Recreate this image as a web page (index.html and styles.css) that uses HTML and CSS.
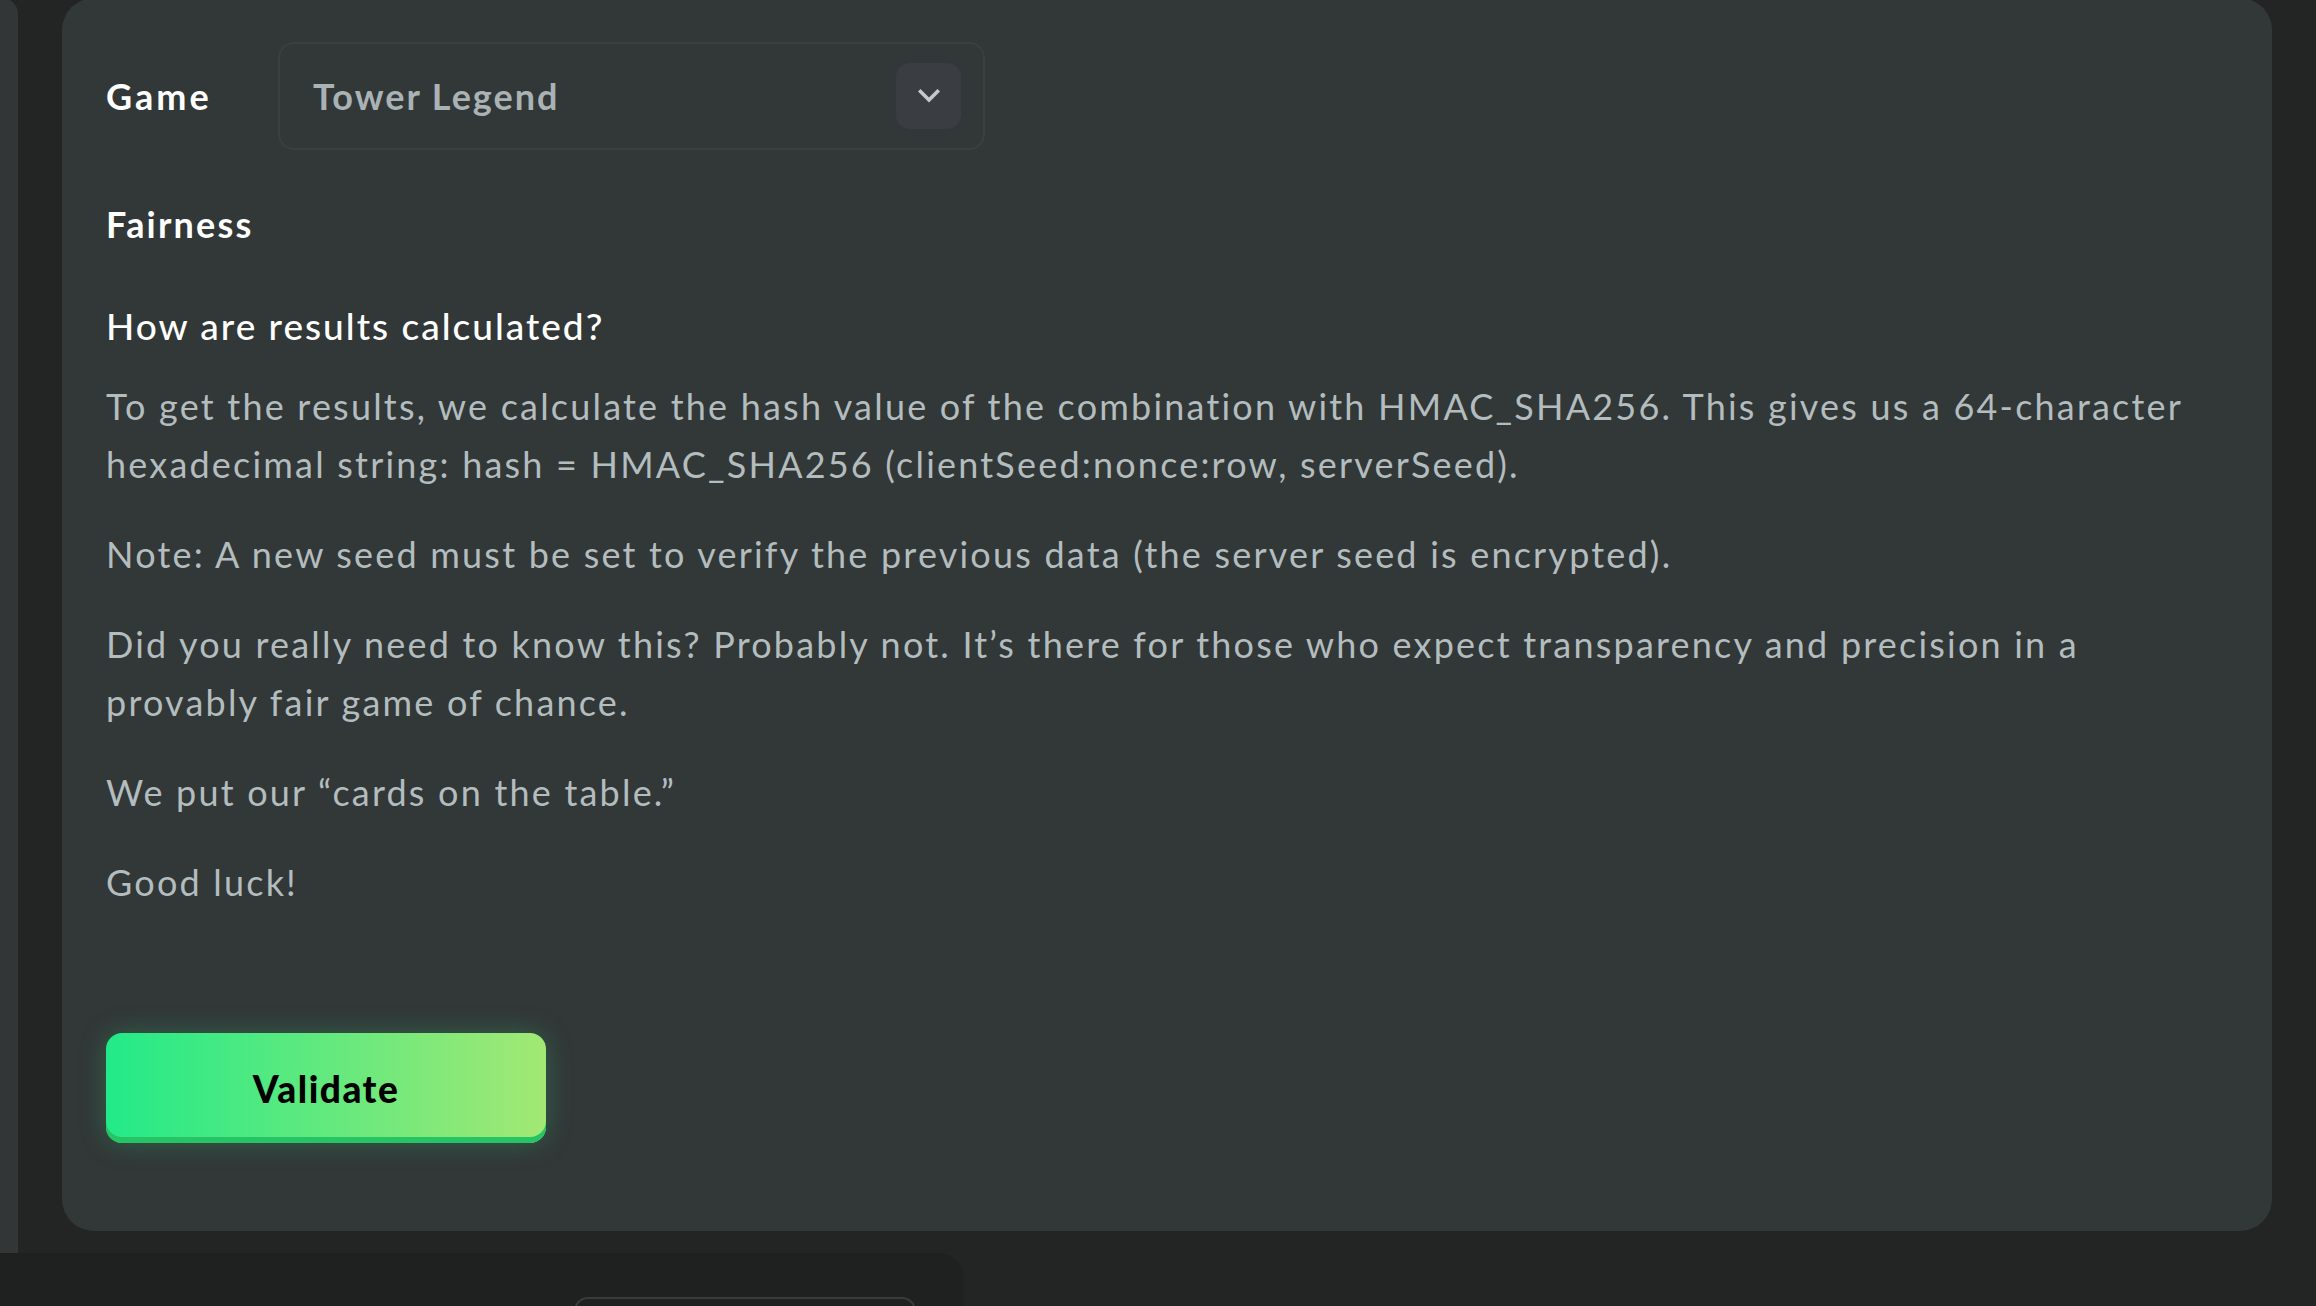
FILE: index.html
```html
<!DOCTYPE html>
<html lang="en">

<head>
    <meta charset="UTF-8">
    <meta name="viewport" content="width=device-width, initial-scale=1.0">
    <title>Fairness</title>
    <link rel="stylesheet" href="styles.css">
</head>

<body>
    <div class="page">
        <aside class="rail"></aside>
        <main class="card">
            <div class="game-row">
                <span class="game-label">Game</span>
                <div class="select">
                    <span class="select-value">Tower Legend</span>
                    <span class="select-toggle">
                        <svg width="22" height="14" viewBox="0 0 22 14">
                            <path d="M2.5 2.5 L11 11 L19.5 2.5" fill="none" stroke="#c3cacc" stroke-width="3.6" stroke-linecap="square" />
                        </svg>
                    </span>
                </div>
            </div>
            <h2 class="section-title">Fairness</h2>
            <h3 class="question">How are results calculated?</h3>
            <p class="text">To get the results, we calculate the hash value of the combination with HMAC_SHA256. This gives us a 64-character hexadecimal string: hash = HMAC_SHA256 (clientSeed:nonce:row, serverSeed).</p>
            <p class="text">Note: A new seed must be set to verify the previous data (the server seed is encrypted).</p>
            <p class="text">Did you really need to know this? Probably not. It’s there for those who expect transparency and precision in a provably fair game of chance.</p>
            <p class="text">We put our “cards on the table.”</p>
            <p class="text">Good luck!</p>
            <button class="btn-validate">Validate</button>
        </main>
    </div>
    <div class="bottom-panel">
        <div class="bottom-field"></div>
    </div>
</body>

</html>
```

FILE: styles.css
```css
html {
    font-family: Lato, 'Noto Sans', sans-serif;
}

body {
    margin: 0;
    height: 1306px;
    overflow: hidden;
    background: #232524;
}

.page {
    display: flex;
    gap: 44px;
    padding-right: 44px;
    height: 1255px;
    margin-top: -2px;
}

.rail {
    width: 18px;
    flex: none;
    background: #323636;
    border-radius: 0 16px 0 0;
}

.card {
    flex: 1;
    align-self: flex-start;
    background: #323737;
    border-radius: 32px;
    padding: 44px 44px 88px;
}

.game-row {
    display: flex;
    align-items: center;
}

.game-label {
    width: 172px;
    font-size: 36px;
    font-weight: 700;
    letter-spacing: 3px;
    color: #ffffff;
}

.select {
    box-sizing: border-box;
    width: 707px;
    height: 108px;
    border: 2px solid #3a3f40;
    border-radius: 16px;
    display: flex;
    align-items: center;
    justify-content: space-between;
    padding: 0 22px 0 33px;
}

.select-value {
    font-size: 36px;
    font-weight: 700;
    letter-spacing: 2px;
    color: #a9b2b4;
}

.select-toggle {
    width: 65px;
    height: 66px;
    border-radius: 14px;
    background: #3a3e42;
    display: flex;
    align-items: center;
    justify-content: center;
}

.section-title {
    margin: 50px 0 0;
    font-size: 36px;
    line-height: 48px;
    font-weight: 700;
    letter-spacing: 2.2px;
    color: #ffffff;
}

.question {
    margin: 54px 0 27px;
    font-size: 37px;
    line-height: 48px;
    font-weight: 500;
    letter-spacing: 2px;
    color: #ffffff;
}

.text {
    max-width: 2110px;
    margin: 0 0 32px;
    font-size: 36px;
    line-height: 58px;
    letter-spacing: 2.2px;
    color: #b3bcbe;
}

.text:last-of-type {
    margin-bottom: 0;
}

.btn-validate {
    display: block;
    margin-top: 122px;
    width: 440px;
    height: 110px;
    border: none;
    border-radius: 16px;
    background: linear-gradient(90deg, #22ea88, #a3e874);
    box-shadow: inset 0 -6px 0 #27c466, 0 0 28px rgba(43, 235, 139, 0.25);
    font-family: inherit;
    font-size: 37px;
    font-weight: 900;
    letter-spacing: 1.5px;
    color: #000000;
    cursor: pointer;
}

.bottom-panel {
    width: 963px;
    height: 60px;
    background: #1f2120;
    border-radius: 0 24px 0 0;
    padding-top: 44px;
    box-sizing: border-box;
}

.bottom-field {
    margin-left: 574px;
    width: 338px;
    height: 60px;
    border: 2px solid #363b3c;
    border-radius: 14px;
}
```
